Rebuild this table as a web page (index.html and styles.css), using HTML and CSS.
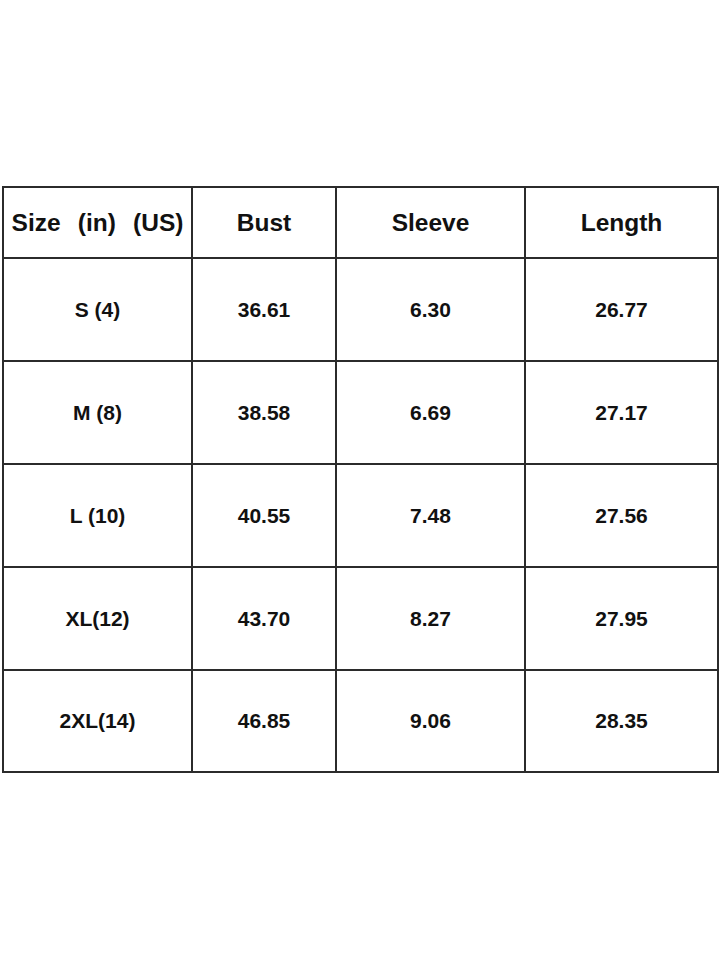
FILE: index.html
```html
<!DOCTYPE html>
<html>
<head>
<meta charset="utf-8">
<link rel="stylesheet" href="styles.css">
</head>
<body>
<div class="size-table">
  <div class="cell head head-wide">Size&nbsp; (in)&nbsp; (US)</div>
  <div class="cell head">Bust</div>
  <div class="cell head">Sleeve</div>
  <div class="cell head">Length</div>

  <div class="cell">S (4)</div>
  <div class="cell">36.61</div>
  <div class="cell">6.30</div>
  <div class="cell">26.77</div>

  <div class="cell">M (8)</div>
  <div class="cell">38.58</div>
  <div class="cell">6.69</div>
  <div class="cell">27.17</div>

  <div class="cell">L (10)</div>
  <div class="cell">40.55</div>
  <div class="cell">7.48</div>
  <div class="cell">27.56</div>

  <div class="cell">XL(12)</div>
  <div class="cell">43.70</div>
  <div class="cell">8.27</div>
  <div class="cell">27.95</div>

  <div class="cell">2XL(14)</div>
  <div class="cell">46.85</div>
  <div class="cell">9.06</div>
  <div class="cell">28.35</div>
</div>
</body>
</html>
```
FILE: styles.css
```css
html, body {
  margin: 0;
  background: #ffffff;
}
body {
  width: 720px;
  height: 960px;
  padding: 186px 0 0 2px;
  box-sizing: border-box;
  font-family: "Liberation Sans", Arial, sans-serif;
  font-weight: bold;
  color: #111;
}
.size-table {
  display: grid;
  grid-template-columns: 189px 144px 189px 193px;
  grid-template-rows: 71px 103px 103px 103px 103px 102px;
  width: 717px;
  border-top: 2px solid #2b2b2b;
  border-left: 2px solid #2b2b2b;
  box-sizing: border-box;
}
.cell {
  border-right: 2px solid #2b2b2b;
  border-bottom: 2px solid #2b2b2b;
  display: flex;
  align-items: center;
  justify-content: center;
  font-size: 21px;
  white-space: nowrap;
}
.cell.head {
  font-size: 24.5px;
}
.cell.head-wide {
  word-spacing: 1.8px;
}
```
